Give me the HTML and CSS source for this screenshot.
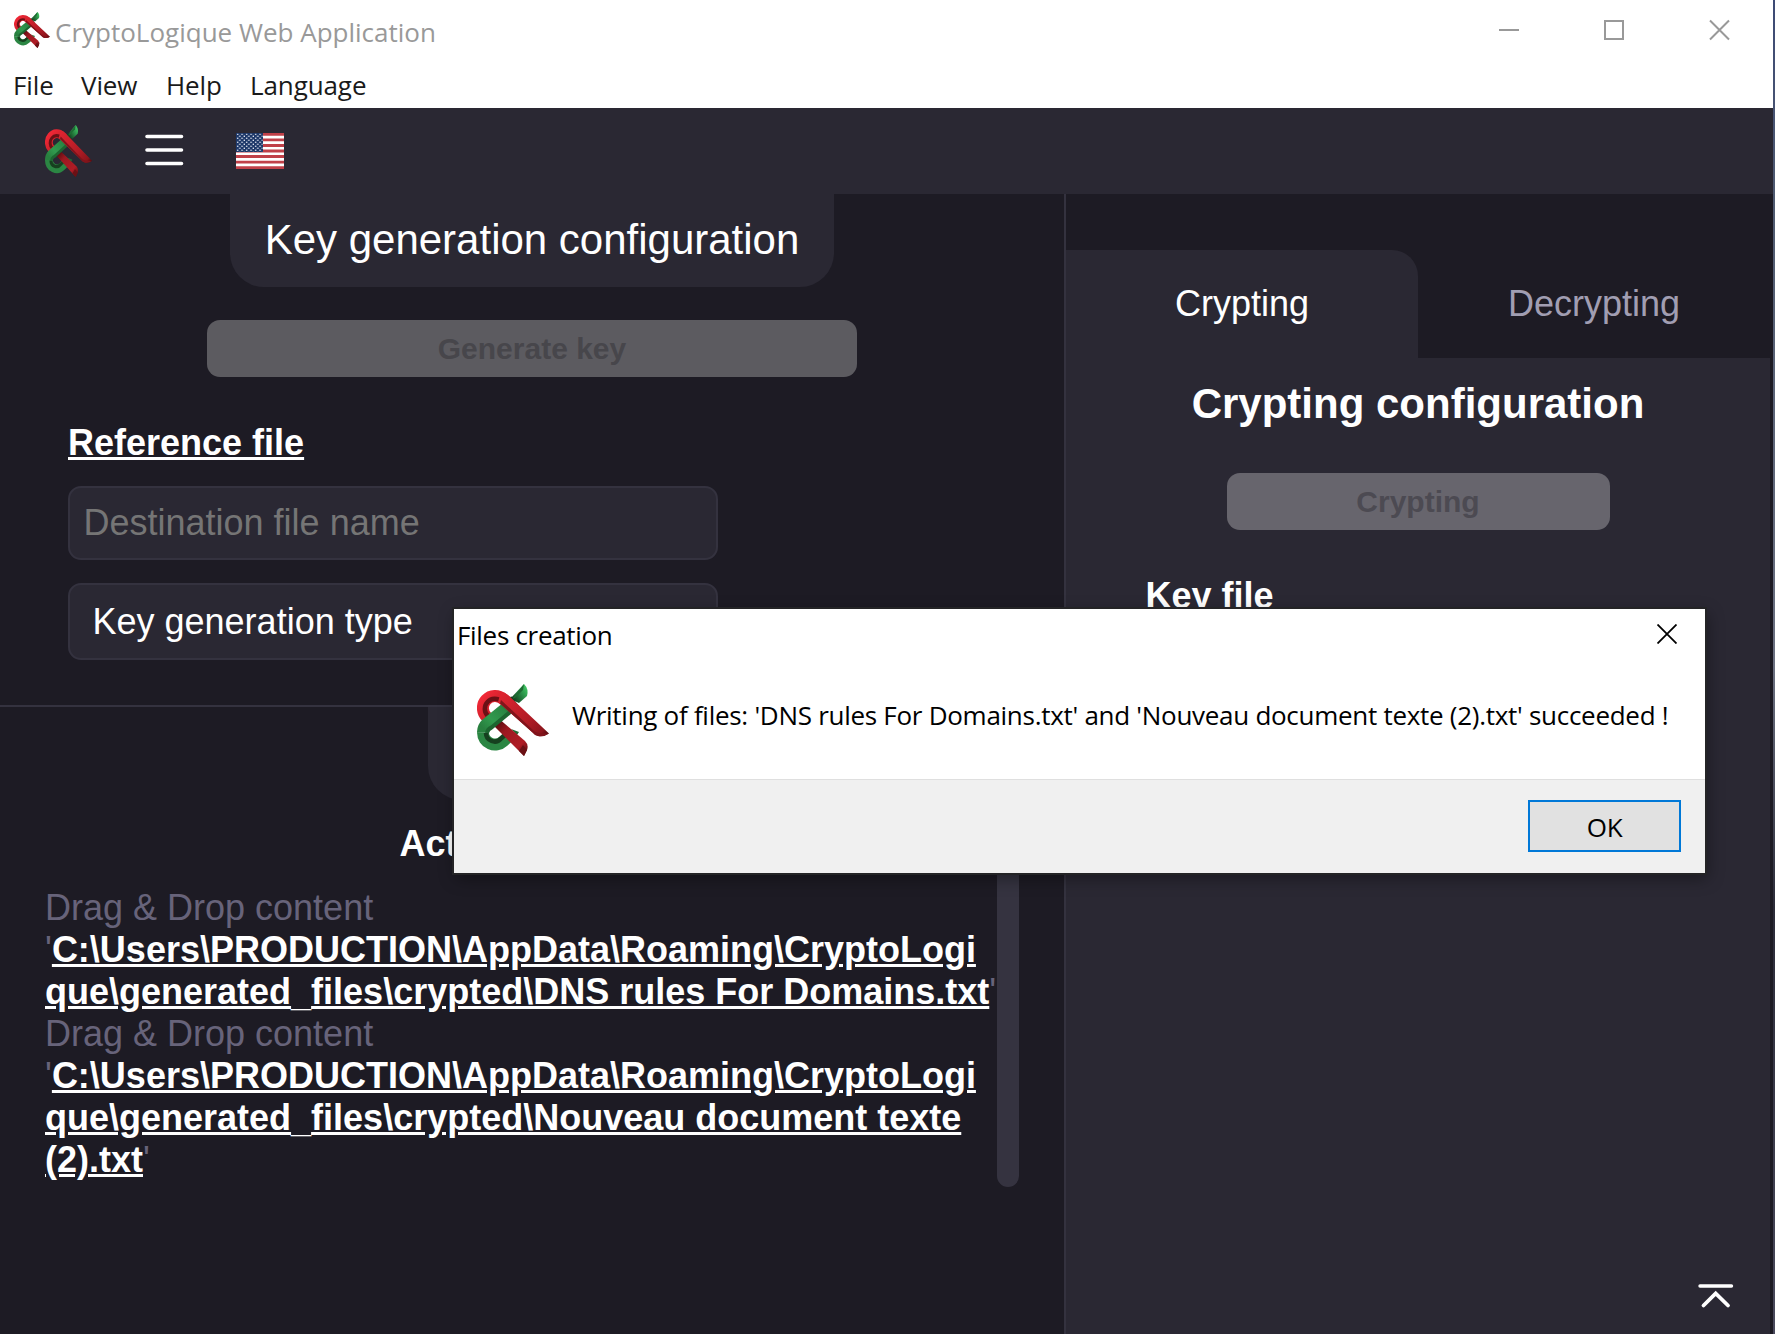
FILE: index.html
```html
<!DOCTYPE html>
<html lang="en">
<head>
<meta charset="utf-8">
<title>CryptoLogique Web Application</title>
<link rel="stylesheet" href="styles.css">
</head>
<body>
<svg class="defs" width="0" height="0" aria-hidden="true">
  <defs>
    <linearGradient id="redLoop" x1="0" y1="0" x2="1" y2="1"><stop offset="0" stop-color="#f02836"/><stop offset=".5" stop-color="#cf202b"/><stop offset="1" stop-color="#8c141b"/></linearGradient>
    <linearGradient id="redLow" gradientUnits="userSpaceOnUse" x1="18" y1="38" x2="50" y2="70"><stop offset="0" stop-color="#4c0a0e"/><stop offset=".3" stop-color="#9c1820"/><stop offset=".75" stop-color="#b01c25"/><stop offset="1" stop-color="#5a0d11"/></linearGradient>
    <linearGradient id="redTop" gradientUnits="userSpaceOnUse" x1="24" y1="12" x2="71" y2="52"><stop offset="0" stop-color="#dd2430"/><stop offset=".6" stop-color="#b01c25"/><stop offset=".88" stop-color="#8c151c"/><stop offset="1" stop-color="#3d080b"/></linearGradient>
    <linearGradient id="greenBar" gradientUnits="userSpaceOnUse" x1="34" y1="16" x2="6" y2="44"><stop offset="0" stop-color="#14401f"/><stop offset=".3" stop-color="#2a8644"/><stop offset=".7" stop-color="#319a4e"/><stop offset="1" stop-color="#28803f"/></linearGradient>
    <linearGradient id="greenTip" gradientUnits="userSpaceOnUse" x1="36" y1="16" x2="51" y2="6"><stop offset="0" stop-color="#123a1c"/><stop offset=".6" stop-color="#2b8f48"/><stop offset="1" stop-color="#3fc462"/></linearGradient>
    <symbol id="logo" viewBox="0 0 72 72" preserveAspectRatio="none">
      <path d="M33 15 47 0Q52 5 50 12L42 19Z" fill="url(#greenTip)"/>
      <path d="M35 15 47 0 46 6 38 14Z" fill="#1e6b33"/>
      <path d="M6 48.500A12 12 0 0 0 26.2 57.3L31 53" fill="none" stroke="#2b8643" stroke-width="12"/>
      <path d="M9 49A8.500 8.500 0 0 0 24 54.500L34 46" fill="none" stroke="#16401f" stroke-width="4.500"/>
      <path d="M34 45 42 48 40 51Z" fill="#1f6b34"/>
      <path d="M14 37 9.800 33A12 12 0 0 1 26.2 15.200L30 18" fill="none" stroke="url(#redLoop)" stroke-width="12"/>
      <path d="M11 32A8.500 8.500 0 0 1 24.500 17.500L33 25" fill="none" stroke="#6b1015" stroke-width="4.500"/>
      <path d="M24 36.500 48 57Q52 61 50 66L47 72 16 41Z" fill="url(#redLow)"/>
      <path d="M50 66 47 72 42 67 46 61Z" fill="#6b1015"/>
      <path d="M38 17 9.800 39.700A12 12 0 0 0 6 48.700" fill="none" stroke="url(#greenBar)" stroke-width="12"/>
      <path d="M38 24 14.500 43.500A7 7 0 0 0 10 49" fill="none" stroke="#1d6530" stroke-width="4"/>
      <path d="M24 8Q28 8 31 11L72 49.500Q67 53 61 52Q58 51 55 48L21 18Z" fill="url(#redTop)"/>
      <path d="M24 16 57 47Q61 50 72 49.500 67 53 61 52 57 51 55 48L23 19.500Z" fill="#81141b"/>
    </symbol>
  </defs>
</svg>
<div class="window">
  <div class="title-bar">
    <svg class="title-logo"><use href="#logo"/></svg>
    <span class="title-text">CryptoLogique Web Application</span>
    <svg class="window-buttons" width="232" height="22" viewBox="0 0 232 22" fill="none" stroke="#999" stroke-width="2">
      <path d="M0 11H20M106 2H124V20H106ZM211 1.500 230 20.500M230 1.500 211 20.500"/>
    </svg>
  </div>
  <nav class="menu-bar"><span class="m-file">File</span><span class="m-view">View</span><span class="m-help">Help</span><span class="m-lang">Language</span></nav>
  <header class="app-header">
    <svg class="header-logo"><use href="#logo"/></svg>
    <svg class="burger" width="39" height="34" viewBox="0 0 39 34" stroke="#fff" stroke-width="3.600" stroke-linecap="round"><path d="M2 3.500H36.500M2 17H36.500M2 30.500H36.500"/></svg>
    <svg class="flag" width="48" height="36" viewBox="0 0 48 36">
      <defs><pattern id="stars" width="4.500" height="4" patternUnits="userSpaceOnUse"><circle cx="1.600" cy="1.200" r=".8" fill="#eef1f8"/><circle cx="3.850" cy="3.200" r=".8" fill="#eef1f8"/></pattern></defs>
      <path fill="#fff" d="M0 0H48V36H0Z"/>
      <path stroke="#c04048" stroke-width="2.770" d="M0 1.400H48M0 6.930H48M0 12.500H48M0 18H48M0 23.500H48M0 29.100H48M0 34.600H48"/>
      <path fill="#1c3768" d="M0 0H27V19H0Z"/><path fill="url(#stars)" d="M.5 .5H26.500V18.500H.5Z"/>
    </svg>
  </header>
  <main class="workspace">
    <div class="left">
      <section class="keygen">
        <h1 class="section-tab">Key generation configuration</h1>
        <button class="action wide" disabled>Generate key</button>
        <div class="form">
          <h2 class="label">Reference file</h2>
          <div class="field placeholder">Destination file name</div>
          <div class="field select">Key generation type</div>
        </div>
      </section>
      <section class="actions">
        <div class="section-tab small"></div>
        <div class="scroll-area">
          <div class="log">
            <h2 class="log-title">Act</h2>
            <p>Drag &amp; Drop content<br>'<a>C:\Users\PRODUCTION\AppData\Roaming\CryptoLogi<br>que\generated<span class="underscore">_</span>files\crypted\DNS rules For Domains.txt</a>'</p>
            <p>Drag &amp; Drop content<br>'<a>C:\Users\PRODUCTION\AppData\Roaming\CryptoLogi<br>que\generated<span class="underscore">_</span>files\crypted\Nouveau document texte<br>(2).txt</a>'</p>
          </div>
          <div class="scrollbar"></div>
        </div>
      </section>
    </div>
    <aside class="right">
      <div class="tabs"><div class="tab active">Crypting</div><div class="tab">Decrypting</div></div>
      <div class="tab-panel">
        <h1 class="panel-title">Crypting configuration</h1>
        <button class="action narrow" disabled>Crypting</button>
        <h2 class="label key-label">Key file</h2>
        <svg class="to-top" width="36" height="26" viewBox="0 0 36 26" fill="none" stroke="#fff" stroke-linecap="round"><path stroke-width="3.400" d="M2 3H33.500"/><path stroke-width="3.800" d="M5.500 22.500 17.700 10.500 30 22.500"/></svg>
      </div>
    </aside>
  </main>
</div>
<div class="desktop-edge"></div>
<div class="dialog" role="dialog">
  <div class="dialog-head"><span>Files creation</span>
    <svg width="20" height="20" viewBox="0 0 20 20" stroke="#000" stroke-width="1.800"><path d="M.5 .5 19.500 19.500M19.500 .5 .5 19.500"/></svg>
  </div>
  <div class="dialog-body">
    <svg class="dialog-logo"><use href="#logo"/></svg>
    <span class="message">Writing of files: 'DNS rules For Domains.txt' and 'Nouveau document texte (2).txt' succeeded !</span>
  </div>
  <div class="dialog-foot"><button class="ok">OK</button></div>
</div>
</body>
</html>
```
FILE: styles.css
```css
* { box-sizing: border-box; }
body {
  margin: 0;
  width: 1775px;
  height: 1334px;
  overflow: hidden;
  display: flex;
  position: relative;
  background: #1d1b24;
  font-family: "Liberation Sans", Arial, sans-serif;
  color: #fff;
}
svg { display: block; flex: none; }
h1, h2, p { margin: 0; }
.defs { position: absolute; }
.window { width: 1773px; height: 1334px; display: flex; flex-direction: column; }
.desktop-edge { width: 2px; background: linear-gradient(#3d4a75, #4f5a70 15%, #6b7080 50%, #2b2b38 68%, #4a4a5c); }

.title-bar, .menu-bar, .dialog {
  font-family: "Segoe UI", "Open Sans", "Noto Sans", sans-serif;
  font-size: 26px;
  line-height: 36px;
  letter-spacing: -0.31px;
  white-space: nowrap;
}
.title-bar { height: 67px; padding: 12px 42px 0 14px; display: flex; align-items: flex-start; background: #fff; color: #999; letter-spacing: 0; }
.title-logo { width: 36px; height: 36px; }
.title-text { margin: 2px 0 0 5px; }
.window-buttons { margin: 7px 0 0 auto; }
.menu-bar { height: 41px; padding-left: 13px; display: flex; background: #fff; color: #1a1a1a; letter-spacing: -0.1px; }
.m-file { width: 68px; }
.m-view { width: 85px; }
.m-help { width: 84px; }

.app-header { height: 86px; padding-left: 45px; display: flex; align-items: flex-start; background: #2a2833; }
.header-logo { width: 47px; height: 52px; margin-top: 17px; }
.burger { margin: 25px 0 0 53px; }
.flag { margin: 25px 0 0 52px; }

.workspace { flex: 1; display: flex; min-height: 0; }
.left { width: 1066px; border-right: 2px solid #34323f; display: flex; flex-direction: column; }
.keygen { height: 513px; border-bottom: 2px solid #34323f; display: flex; flex-direction: column; align-items: center; }
.section-tab {
  width: 604px;
  height: 93px;
  border-radius: 0 0 34px 34px;
  background: #2a2833;
  text-align: center;
  font-size: 42px;
  font-weight: 400;
  line-height: 92px;
  white-space: nowrap;
}
.section-tab.small { width: 208px; align-self: center; flex: none; }
.action {
  height: 57px;
  padding: 0;
  border: 0;
  border-radius: 13px;
  font: bold 30px/57px "Liberation Sans", Arial, sans-serif;
}
.wide { width: 650px; margin-top: 33px; background: #5c5b60; color: #47464b; }
.form { align-self: stretch; padding-left: 68px; margin-top: 45px; }
.label { font-size: 36px; line-height: 42px; text-decoration: underline; }
.field {
  width: 650px;
  height: 74px;
  border: 2px solid #34323f;
  border-radius: 13px;
  background: #2a2833;
  font-size: 36px;
  line-height: 70px;
}
.placeholder { margin-top: 22px; padding-left: 13.5px; color: #757575; }
.select { height: 77px; margin-top: 23px; padding-left: 22.5px; line-height: 74px; }

.actions { flex: 1; display: flex; flex-direction: column; }
.scroll-area { height: 387px; padding: 0 45px; display: flex; }
.log { width: 952px; font-size: 36px; line-height: 42px; color: #67637a; white-space: nowrap; padding-top: 23px; }
.log-title { font-size: 36px; line-height: 42px; padding-left: 354.5px; margin-bottom: 22px; color: #fff; }
.log a { color: #fff; font-weight: 700; text-decoration: underline; }
.underscore { display: inline-block; position: relative; top: 2px; }
.scrollbar { width: 22px; border-radius: 11px; background: #353340; }

.right { width: 704px; display: flex; flex-direction: column; padding-top: 56px; }
.tabs { height: 108px; display: flex; }
.tab { flex: 1; text-align: center; font-size: 36px; line-height: 107px; color: #a19eb2; }
.tab.active { background: #2a2833; border-radius: 0 26px 0 0; color: #fff; }
.tab-panel { flex: 1; background: #2a2833; display: flex; flex-direction: column; align-items: center; }
.panel-title { margin-top: 22px; font-size: 42px; line-height: 48px; }
.narrow { width: 383px; margin-top: 45px; background: #67656d; color: #4c4a52; }
.key-label { align-self: flex-start; margin: 45px 0 0 79.5px; }
.to-top { align-self: flex-end; margin: auto 36px 25px 0; }

.dialog {
  position: absolute;
  left: 454px;
  top: 609px;
  width: 1251px;
  height: 264px;
  display: flex;
  flex-direction: column;
  background: #fff;
  color: #000;
  box-shadow: 0 0 0 2px #242426, 2px 5px 16px rgba(0, 0, 0, .4);
}
.dialog-head { height: 56px; padding: 8px 28px 0 3px; display: flex; justify-content: space-between; }
.dialog-head svg { margin-top: 7px; }
.dialog-body { height: 114px; padding: 19px 0 0 23px; display: flex; }
.dialog-logo { width: 72px; height: 72px; }
.message { margin: 13px 0 0 23px; letter-spacing: -0.28px; }
.dialog-foot { flex: 1; border-top: 1px solid #dfdfdf; background: #f0f0f0; display: flex; justify-content: flex-end; align-items: flex-start; padding: 20px 24px 0 0; }
.ok { width: 153px; height: 52px; padding: 1px 0 0; border: 2px solid #0078d7; background: #e1e1e1; color: #000; font: inherit; letter-spacing: -0.3px; }
```
